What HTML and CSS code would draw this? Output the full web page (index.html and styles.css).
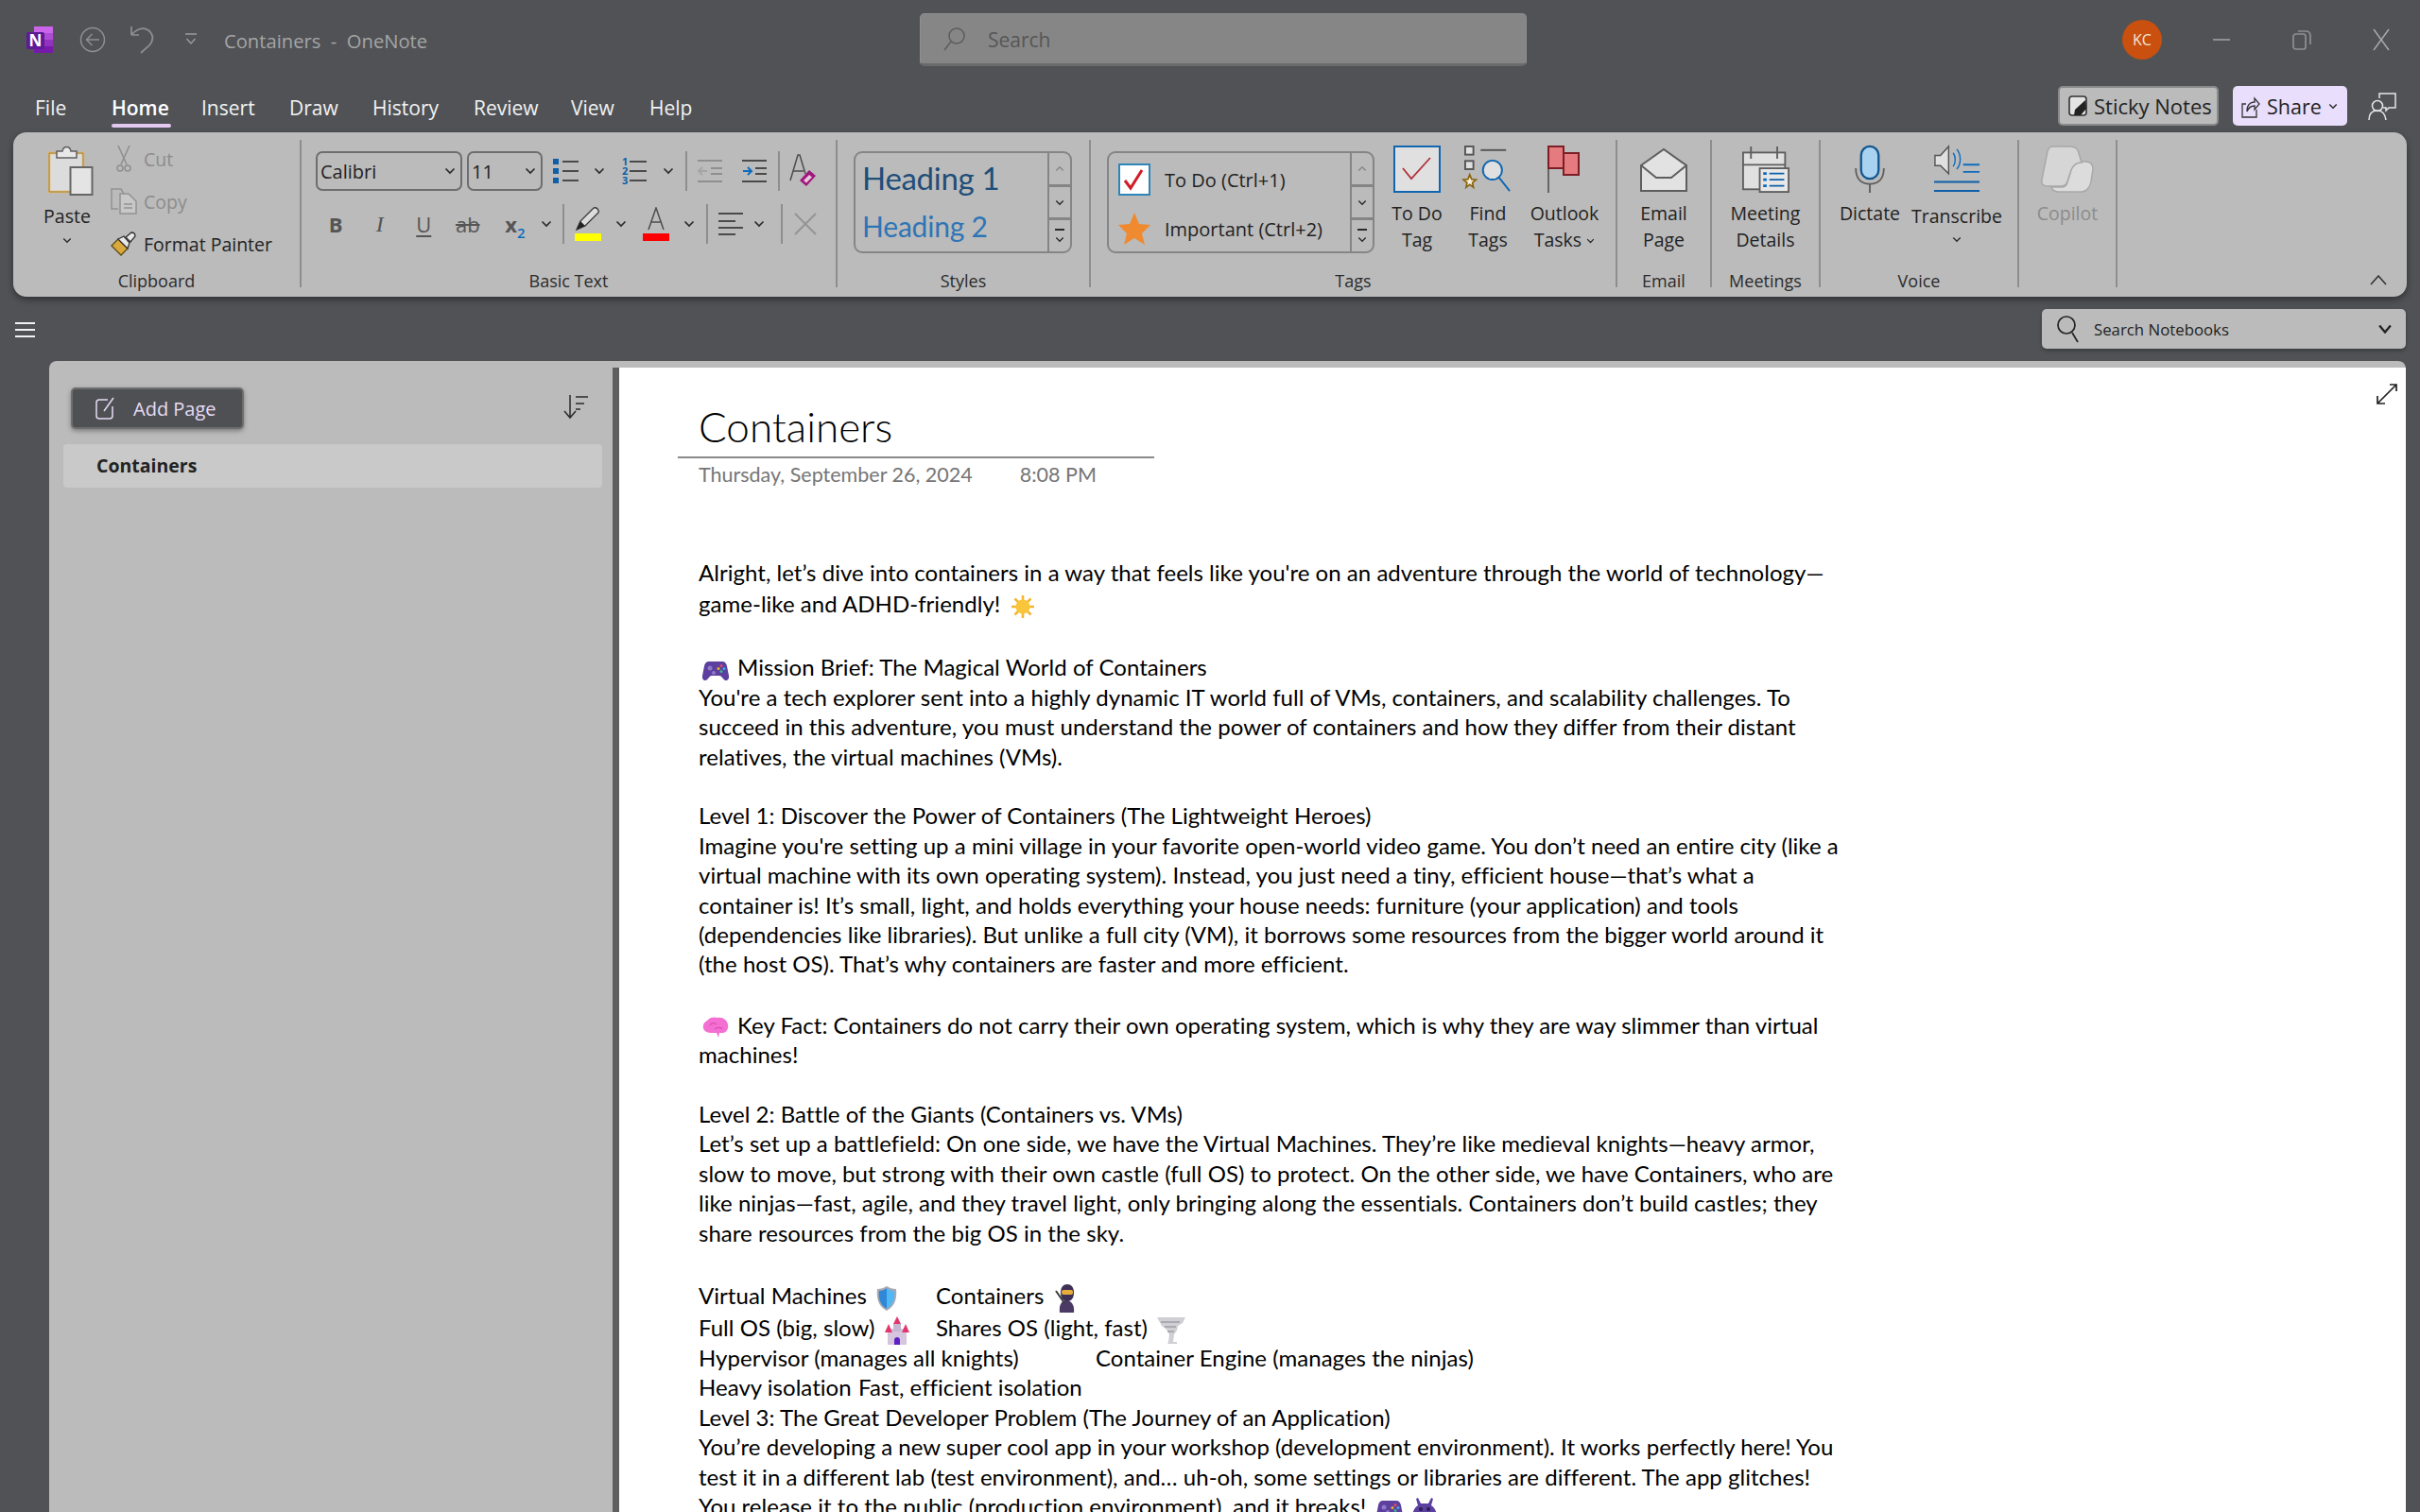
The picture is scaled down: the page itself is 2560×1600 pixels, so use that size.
FILE: index.html
```html
<!DOCTYPE html>
<html lang="en">
<head>
  <meta charset="UTF-8" />
  <title>Containers - OneNote</title>
  <link rel="stylesheet" href="styles.css">
</head>
<body>

  <!-- Shared icons -->
  <svg class="defs" width="0" height="0" aria-hidden="true">
    <symbol id="chev" viewBox="0 0 12 8"><path d="M1.5 1.5 6 6l4.500-4.500" fill="none" stroke="#2b2b2b" stroke-width="1.700"/></symbol>
    <symbol id="pad" viewBox="0 0 28 24">
      <path d="M7 3h14c3 0 4.500 2 5 5l2 10c.5 3-1 5-3 5-3 0-4-5-7-5H10c-3 0-4 5-7 5-2 0-3.500-2-3-5L2 8c.5-3 2-5 5-5z" fill="#5c3f9e"/>
      <circle cx="8" cy="10" r="2.500" fill="#8e79c9"/><circle cx="12" cy="15" r="2" fill="#8e79c9"/>
      <circle cx="20" cy="7.500" r="1.500" fill="#e04a6a"/><circle cx="23" cy="10.500" r="1.500" fill="#3fa7e0"/><circle cx="17" cy="10.500" r="1.500" fill="#e8b030"/><circle cx="20" cy="13.500" r="1.500" fill="#36b98a"/>
    </symbol>
  </svg>

  <!-- Title bar -->
  <header class="titlebar">
    <div class="title-left">
      <svg width="28" height="28" viewBox="0 0 28 28" class="app-icon">
        <rect x="8" width="20" height="7" fill="#ca64ea"/><rect x="8" y="7" width="20" height="7" fill="#ae4bd5"/><rect x="8" y="14" width="20" height="7" fill="#9332bf"/><rect x="8" y="21" width="20" height="7" fill="#7719aa"/>
        <rect y="6" width="19" height="18" rx="2" fill="#5f1a98"/>
        <text x="9.500" y="20.500" text-anchor="middle" class="app-n">N</text>
      </svg>
      <svg width="28" height="28" viewBox="0 0 28 28" class="back-icon"><circle cx="14" cy="14" r="12.500" fill="none" stroke="#8f8f8f" stroke-width="1.500"/><path d="M21 14H8m5.500-6L7.500 14l6 6" fill="none" stroke="#8f8f8f" stroke-width="1.500"/></svg>
      <svg width="26" height="30" viewBox="0 0 26 30" class="undo-icon"><path d="M1 10h8m-8 0V1m0 9c5-6 12-9 18-5 6 5 5 11 1 16L11 29" fill="none" stroke="#8f8f8f" stroke-width="1.700"/></svg>
      <svg width="12" height="14" viewBox="0 0 12 14" class="qat-icon"><path d="M0 1h12M1.500 6 6 11l4.500-5" fill="none" stroke="#9a9a9a" stroke-width="1.500"/></svg>
      <span class="doc-title">Containers&nbsp; -&nbsp; OneNote</span>
    </div>
    <div class="top-search">
      <svg width="24" height="26" viewBox="0 0 24 26"><circle cx="14" cy="10" r="8" fill="none" stroke="#5c5c5c" stroke-width="1.500"/><path d="M8 16 1 25" stroke="#5c5c5c" stroke-width="1.500"/></svg>
      <span>Search</span>
    </div>
    <div class="title-right">
      <div class="avatar">KC</div>
      <svg width="18" height="4" viewBox="0 0 18 4" class="win-min"><path d="M0 2h18" stroke="#8f8f8f" stroke-width="2"/></svg>
      <svg width="20" height="22" viewBox="0 0 20 22" class="win-max"><rect x="1" y="5" width="13" height="16" rx="2.500" fill="none" stroke="#8f8f8f" stroke-width="1.700"/><path d="M6 2h8c3 0 5 2 5 5v9" fill="none" stroke="#8f8f8f" stroke-width="1.700"/></svg>
      <svg width="18" height="24" viewBox="0 0 18 24" class="win-close"><path d="M1 1l16 22M17 1 1 23" stroke="#a8a8a8" stroke-width="1.500"/></svg>
    </div>
  </header>

  <!-- Tabs -->
  <nav class="tabs">
    <span class="tab">File</span>
    <span class="tab active"><b>Home</b></span>
    <span class="tab">Insert</span>
    <span class="tab">Draw</span>
    <span class="tab">History</span>
    <span class="tab">Review</span>
    <span class="tab">View</span>
    <span class="tab">Help</span>
    <div class="tab-actions">
      <button class="sticky-btn">
        <svg width="20" height="22" viewBox="0 0 20 22"><rect x="1" y="1" width="18" height="20" rx="3" fill="#e4e4e4" stroke="#333" stroke-width="1.600"/><path d="M18 5 7 15l-1 6h7l6-7z" fill="#222"/></svg>
        Sticky Notes
      </button>
      <button class="share-btn">
        <svg width="20" height="26" viewBox="0 0 20 26"><path d="M5 11H1v14h15v-8" fill="none" stroke="#333" stroke-width="1.300"/><path d="M6 19c0-7 3-10 8-10V5l5 6-5 6v-4c-3 0-6 1-8 6z" fill="#e8dcfb" stroke="#333" stroke-width="1.300"/></svg>
        Share
        <svg width="10" height="7" viewBox="0 0 12 8"><use href="#chev"/></svg>
      </button>
      <svg width="30" height="30" viewBox="0 0 30 30" class="feedback-icon"><path d="M12 6V1h17v15h-7l-3 3v-3h-3" fill="none" stroke="#e6e6e6" stroke-width="1.500"/><circle cx="10" cy="14" r="5.500" fill="#505256" stroke="#e6e6e6" stroke-width="1.500"/><path d="M1 29c0-7 4-10 9-10s8 3 9 10" fill="none" stroke="#e6e6e6" stroke-width="1.500"/></svg>
    </div>
  </nav>

  <!-- Ribbon -->
  <section class="ribbon">

    <div class="group g-clipboard">
      <div class="group-body">
        <div class="paste-col">
          <svg width="50" height="53" viewBox="0 0 50 53">
            <rect x="2" y="8" width="36" height="41" fill="#dcdcdc" stroke="#e9b44f" stroke-width="2.500"/>
            <path d="M2 8h36v41H2z" fill="none" stroke="#6b6b6b" stroke-width=".6"/>
            <path d="M10 6h6c1-6 8-6 9 0h6v7H10z" fill="#e8e8e8" stroke="#5f5f5f" stroke-width="1.500"/>
            <rect x="24.500" y="23" width="23" height="29" fill="#e4e4e4" stroke="#666" stroke-width="2"/>
          </svg>
          <span class="paste-label">Paste</span>
          <svg width="10" height="7" class="paste-chev"><use href="#chev"/></svg>
        </div>
        <div class="clip-col">
          <div class="clip-row off">
            <span class="clip-icon"><svg width="18" height="28" viewBox="0 0 18 28"><path d="M3 0l9 20M15 0 6 20" fill="none" stroke="#8f8f8f" stroke-width="1.500"/><circle cx="5" cy="24" r="3" fill="none" stroke="#8f8f8f" stroke-width="1.500"/><circle cx="13" cy="24" r="3" fill="none" stroke="#8f8f8f" stroke-width="1.500"/></svg></span>
            Cut
          </div>
          <div class="clip-row off">
            <span class="clip-icon"><svg width="28" height="28" viewBox="0 0 28 28"><path d="M8 22H1V1h10l3 5" fill="none" stroke="#929292" stroke-width="1.500"/><path d="M10 6h9l8 8v13H10z" fill="#c8c8c8" stroke="#929292" stroke-width="1.500"/><path d="M14 17h9M14 21h9" stroke="#929292" stroke-width="1.500"/></svg></span>
            Copy
          </div>
          <div class="clip-row">
            <span class="clip-icon"><svg width="28" height="26" viewBox="0 0 28 26"><path d="M1 15l7-7 10 10-7 7z" fill="#d9a93c" stroke="#5c4a15" stroke-width="1.300"/><path d="M8 8l6-3 6 7-2 6z" fill="#e8e8e8" stroke="#333" stroke-width="1.300"/><path d="M16 6l6-5c3 0 4 2 4 4l-5 6z" fill="#e8e8e8" stroke="#333" stroke-width="1.300"/></svg></span>
            Format Painter
          </div>
        </div>
      </div>
      <div class="group-label">Clipboard</div>
    </div>

    <div class="group g-basic">
      <div class="basic-rows">
        <div class="basic-row">
          <div class="combo combo-font">Calibri<svg width="12" height="8"><use href="#chev"/></svg></div>
          <div class="combo combo-size">11<svg width="12" height="8"><use href="#chev"/></svg></div>
          <svg width="27" height="28" viewBox="0 0 27 28" class="m11"><path d="M0 1h6v6H0zM0 11h6v6H0zM0 21h6v6H0z" fill="#0f5fa8"/><path d="M10 4h17M10 14h17M10 24h17" stroke="#4a4a4a" stroke-width="2"/></svg>
          <svg width="12" height="8" class="m16"><use href="#chev"/></svg>
          <svg width="27" height="32" viewBox="0 0 27 32" class="m17 num-list"><text x="1" y="10" class="num">1</text><text x="1" y="20" class="num">2</text><text x="1" y="30" class="num">3</text><path d="M9 6h18M9 16h18M9 26h18" stroke="#4a4a4a" stroke-width="2"/></svg>
          <svg width="12" height="8" class="m17"><use href="#chev"/></svg>
          <i class="vsep m12"></i>
          <svg width="26" height="26" viewBox="0 0 26 26" class="m11"><path d="M0 2h26M14 10h12M14 16h12M0 24h26" stroke="#8f8f8f" stroke-width="2"/><path d="M10 13H1m4-4-4 4 4 4" fill="none" stroke="#a5a5a5" stroke-width="2"/></svg>
          <svg width="26" height="26" viewBox="0 0 26 26" class="m21"><path d="M0 2h26M14 10h12M14 16h12M0 24h26" stroke="#4a4a4a" stroke-width="2"/><path d="M1 13h9m-4-4 4 4-4 4" fill="none" stroke="#0f6cbd" stroke-width="2"/></svg>
          <i class="vsep m12"></i>
          <svg width="28" height="36" viewBox="0 0 28 36" class="m10"><path d="M1 28 9 1h2l6 20M4 18h11" fill="none" stroke="#4d4d4d" stroke-width="1.500"/><path d="M11 28 21 17l7 6-10 11z" fill="#a0177e"/><path d="M15 28l6-6 3 2.500-6 6z" fill="#e8c8dc"/></svg>
        </div>
        <div class="basic-row row-two">
          <span class="fmt fmt-b">B</span>
          <span class="fmt fmt-i">I</span>
          <span class="fmt fmt-u">U</span>
          <span class="fmt fmt-s">ab</span>
          <span class="fmt fmt-x">x<sub>2</sub></span>
          <svg width="12" height="8"><use href="#chev"/></svg>
          <i class="vsep m11"></i>
          <svg width="28" height="36" viewBox="0 0 28 36" class="m11"><path d="M2 24l4-9L20 1c3-1 6 2 5 5L11 20z" fill="#dcdcdc" stroke="#333" stroke-width="1.300"/><path d="M2 24l4-9 5 5z" fill="#222"/><rect y="28" width="28" height="8" fill="#ffff00"/></svg>
          <svg width="12" height="8" class="m15"><use href="#chev"/></svg>
          <svg width="28" height="36" viewBox="0 0 28 36" class="m17"><path d="M6 24 14 1l8 23M9 16h10" fill="none" stroke="#4d4d4d" stroke-width="1.500"/><rect y="28" width="28" height="8" fill="#ff0000"/></svg>
          <svg width="12" height="8" class="m15"><use href="#chev"/></svg>
          <i class="vsep m12"></i>
          <svg width="26" height="26" viewBox="0 0 26 26" class="m11"><path d="M0 2h26M0 10h18M0 17h26M0 24h18" stroke="#4a4a4a" stroke-width="2"/></svg>
          <svg width="12" height="8" class="m11"><use href="#chev"/></svg>
          <i class="vsep m17"></i>
          <svg width="24" height="24" viewBox="0 0 24 24" class="m12"><path d="M1 1l22 22M23 1 1 23" stroke="#939393" stroke-width="1.800"/></svg>
        </div>
      </div>
      <div class="group-label">Basic Text</div>
    </div>

    <div class="group g-styles">
      <div class="gallery styles-gallery">
        <div class="gallery-items">
          <div class="style-h1">Heading 1</div>
          <div class="style-h2">Heading 2</div>
        </div>
        <div class="scroll-col">
          <span class="off-chev"><svg width="10" height="7"><use href="#chev"/></svg></span>
          <span><svg width="10" height="7"><use href="#chev"/></svg></span>
          <span class="more"><svg width="10" height="7"><use href="#chev"/></svg></span>
        </div>
      </div>
      <div class="group-label">Styles</div>
    </div>

    <div class="group g-tags">
      <div class="group-body">
        <div class="gallery tags-gallery">
          <div class="gallery-items">
            <div class="tag-row">
              <svg width="34" height="34" viewBox="0 0 34 34"><rect x="1" y="1" width="32" height="32" fill="#fff" stroke="#2e86b8" stroke-width="2"/><path d="M7 18l6 8L25 7" fill="none" stroke="#d01c24" stroke-width="3"/></svg>
              To Do (Ctrl+1)
            </div>
            <div class="tag-row">
              <svg width="34" height="34" viewBox="0 0 34 34"><path d="M17 0l5 12 12 1-9 9 3 12-11-7-11 7 3-12-9-9 12-1z" fill="#f08a30"/></svg>
              Important (Ctrl+2)
            </div>
          </div>
          <div class="scroll-col">
            <span class="off-chev"><svg width="10" height="7"><use href="#chev"/></svg></span>
            <span><svg width="10" height="7"><use href="#chev"/></svg></span>
            <span class="more"><svg width="10" height="7"><use href="#chev"/></svg></span>
          </div>
        </div>
        <div class="tool w82">
          <svg width="50" height="50" viewBox="0 0 50 50"><rect x="1" y="1" width="48" height="48" fill="#e0e0e0" stroke="#1067b0" stroke-width="2"/><path d="M10 24l9 11L39 13" fill="none" stroke="#b0313a" stroke-width="1.800"/></svg>
          <span>To Do<br>Tag</span>
        </div>
        <div class="tool w68">
          <svg width="52" height="52" viewBox="0 0 52 52"><rect x="1" y="1" width="9" height="9" fill="#e0e0e0" stroke="#555" stroke-width="2"/><path d="M18 5h28" stroke="#555" stroke-width="2"/><rect x="1" y="17" width="9" height="9" fill="#e0e0e0" stroke="#555" stroke-width="2"/><path d="M6 32l2 5 5 .5-4 3.500 1 5-4-3-4 3 1-5-4-3.500 5-.5z" fill="#f5f0dc" stroke="#8a6510" stroke-width="1.800"/><circle cx="31" cy="27" r="10.500" fill="#e0e0e0" stroke="#1067b0" stroke-width="2"/><path d="M38 35l12 15" stroke="#1067b0" stroke-width="2"/></svg>
          <span>Find<br>Tags</span>
        </div>
        <div class="tool w94">
          <svg width="36" height="50" viewBox="0 0 36 50"><path d="M1 0v50" stroke="#666" stroke-width="2"/><rect x="1" y="1" width="16" height="23" fill="#e57b7f" stroke="#7d1e26" stroke-width="2"/><rect x="17" y="8" width="16" height="23" fill="#e57b7f" stroke="#7d1e26" stroke-width="2"/></svg>
          <span>Outlook<br>Tasks <svg width="9" height="6"><use href="#chev"/></svg></span>
        </div>
      </div>
      <div class="group-label">Tags</div>
    </div>

    <div class="group g-email">
      <div class="group-body">
        <div class="tool tool-fill">
          <svg class="pad3" width="50" height="46" viewBox="0 0 50 46"><path d="M1 18 25 1l24 17v27H1z" fill="#e2e2e2" stroke="#5e5e5e" stroke-width="2"/><path d="M1 18l16 13h16l16-13" fill="none" stroke="#5e5e5e" stroke-width="2"/></svg>
          <span>Email<br>Page</span>
        </div>
      </div>
      <div class="group-label">Email</div>
    </div>

    <div class="group g-meetings">
      <div class="group-body">
        <div class="tool tool-fill">
          <svg width="54" height="54" viewBox="0 0 54 54"><rect x="1" y="8" width="48" height="42" fill="#e0e0e0" stroke="#5e5e5e" stroke-width="2"/><path d="M1 22h48M10 1v14M40 1v14" stroke="#5e5e5e" stroke-width="2"/><rect x="20" y="26" width="33" height="27" fill="#e8e8e8" stroke="#5e5e5e" stroke-width="2"/><path d="M24 32h4M24 39h4M24 46h4" stroke="#0f6cbd" stroke-width="3"/><path d="M31 32h17M31 39h17M31 46h17" stroke="#0f5fa8" stroke-width="2"/></svg>
          <span>Meeting<br>Details</span>
        </div>
      </div>
      <div class="group-label">Meetings</div>
    </div>

    <div class="group g-voice">
      <div class="group-body">
        <div class="tool w102 dictate">
          <svg width="34" height="54" viewBox="0 0 34 54"><rect x="7" y="1" width="20" height="37" rx="10" fill="#a9d2f0" stroke="#12568f" stroke-width="2.500"/><path d="M1 26c0 13 7 18 16 18s16-5 16-18M17 44v10" fill="none" stroke="#5e5e5e" stroke-width="2"/></svg>
          <span>Dictate</span>
        </div>
        <div class="tool w82 transcribe">
          <svg width="50" height="52" viewBox="0 0 50 52"><path d="M1 11h6l9-10v30l-9-9H1z" fill="#e0e0e0" stroke="#555" stroke-width="1.500"/><path d="M21 8c3 4 3 11 0 15M25 4c5 6 5 16 0 22" fill="none" stroke="#0f6cbd" stroke-width="1.500"/><path d="M32 21h18M32 29h18" stroke="#0f6cbd" stroke-width="2"/><path d="M0 40h50M0 50h50" stroke="#0f5fa8" stroke-width="2"/></svg>
          <span>Transcribe</span>
          <svg class="tool-chev" width="10" height="7"><use href="#chev"/></svg>
        </div>
      </div>
      <div class="group-label">Voice</div>
    </div>

    <div class="group g-copilot">
      <div class="group-body">
        <div class="tool tool-fill off">
          <svg width="56" height="50" viewBox="0 0 56 50"><path d="M33 17h14c5 0 8 3 8 8l-2 13c-1 6-5 11-10 11H19c-4 0-7-2-8-5h11c3 0 5-2 6-5l4-14z" fill="#dcdcdc" stroke="#a8a8a8" stroke-width="1.500"/><path d="M12 1h19c5 0 8 2 9 7l3 10c-6 0-9 3-11 8l-4 12c-1 4-3 5-7 5H6c-4 0-6-3-5-7L7 6c1-3 3-5 5-5z" fill="#d6d6d6" stroke="#a8a8a8" stroke-width="1.500"/></svg>
          <span>Copilot</span>
        </div>
      </div>
      <div class="group-label">&nbsp;</div>
    </div>

    <div class="collapse"><svg width="18" height="11" viewBox="0 0 18 11"><path d="M1 10 9 1l8 9" fill="none" stroke="#333" stroke-width="1.600"/></svg></div>
  </section>

  <!-- Notebook bar -->
  <div class="subbar">
    <div class="hamburger"><i></i><i></i><i></i></div>
    <div class="notebook-search">
      <svg width="24" height="32" viewBox="0 0 24 32"><circle cx="10" cy="12" r="9" fill="none" stroke="#222" stroke-width="1.700"/><path d="M16 20l6 10" stroke="#222" stroke-width="1.700"/></svg>
      <span>Search Notebooks</span>
      <svg width="14" height="10" class="search-chev" viewBox="0 0 12 8"><path d="M1 1l5 6 5-6" fill="none" stroke="#222" stroke-width="2"/></svg>
    </div>
  </div>

  <!-- Page list and page -->
  <main class="workspace">
    <aside class="sidebar">
      <div class="sidebar-head">
        <button class="add-page">
          <svg width="22" height="24" viewBox="0 0 22 24"><path d="M13 3H4C2 3 1 4 1 6v14c0 2 1 3 3 3h11c2 0 3-1 3-3V10" fill="none" stroke="#e6dcf5" stroke-width="1.500"/><path d="M9 15 19 1" stroke="#e6dcf5" stroke-width="1.500"/></svg>
          Add Page
        </button>
        <svg width="26" height="26" viewBox="0 0 26 26"><path d="M7 0v24m-6-7 6 7 6-7" fill="none" stroke="#2b2b2b" stroke-width="1.500"/><path d="M13 2h13M13 9h9M13 15h5" stroke="#2b2b2b" stroke-width="1.500"/></svg>
      </div>
      <div class="page-item">Containers</div>
    </aside>

    <article class="page">
      <svg class="expand" width="22" height="22" viewBox="0 0 22 22"><path d="M14 1h7v7M21 1 1 21M1 13v8h8" fill="none" stroke="#222" stroke-width="1.700"/></svg>
      <div class="page-title-box">
        <h1>Containers</h1>
      </div>
      <div class="page-date"><span>Thursday, September 26, 2024</span><span>8:08 PM</span></div>

      <div class="page-text">
        <p class="first">
          <span class="line">Alright, let’s dive into containers in a way that feels like you're on an adventure through the world of technology—</span>
          <span class="line tall">game-like and ADHD-friendly! <svg class="emoji" width="26" height="26" viewBox="0 0 26 26"><g stroke="#f5b52e" stroke-width="2.500"><path d="M13 1v24M1 13h24M4.500 4.500l17 17M21.500 4.500l-17 17"/></g><circle cx="13" cy="13" r="7.500" fill="#f9c53a"/></svg></span>
        </p>
        <p class="tight">
          <span class="line"><svg class="emoji lead" width="28" height="24"><use href="#pad"/></svg>Mission Brief: The Magical World of Containers</span>
          <span class="line">You're a tech explorer sent into a highly dynamic IT world full of VMs, containers, and scalability challenges. To</span>
          <span class="line">succeed in this adventure, you must understand the power of containers and how they differ from their distant</span>
          <span class="line">relatives, the virtual machines (VMs).</span>
        </p>
        <p>
          <span class="line">Level 1: Discover the Power of Containers (The Lightweight Heroes)</span>
          <span class="line">Imagine you're setting up a mini village in your favorite open-world video game. You don’t need an entire city (like a</span>
          <span class="line">virtual machine with its own operating system). Instead, you just need a tiny, efficient house—that’s what a</span>
          <span class="line">container is! It’s small, light, and holds everything your house needs: furniture (your application) and tools</span>
          <span class="line">(dependencies like libraries). But unlike a full city (VM), it borrows some resources from the bigger world around it</span>
          <span class="line">(the host OS). That’s why containers are faster and more efficient.</span>
        </p>
        <p class="tight">
          <span class="line"><svg class="emoji lead" width="28" height="24" viewBox="0 0 28 24"><path d="M5 4c3-4 8-4 11-3 5-1 10 2 11 7 1 5-2 9-6 9h-3l-1 5-2-5H9C3 17 0 13 1 9c0-2 2-4 4-5z" fill="#f46fd2"/><path d="M8 9c2-3 5-3 7-1M13 13c3-2 6-2 8 0" fill="none" stroke="#d94cb2" stroke-width="1.200"/></svg>Key Fact: Containers do not carry their own operating system, which is why they are way slimmer than virtual</span>
          <span class="line">machines!</span>
        </p>
        <p>
          <span class="line">Level 2: Battle of the Giants (Containers vs. VMs)</span>
          <span class="line">Let’s set up a battlefield: On one side, we have the Virtual Machines. They’re like medieval knights—heavy armor,</span>
          <span class="line">slow to move, but strong with their own castle (full OS) to protect. On the other side, we have Containers, who are</span>
          <span class="line">like ninjas—fast, agile, and they travel light, only bringing along the essentials. Containers don’t build castles; they</span>
          <span class="line">share resources from the big OS in the sky.</span>
        </p>
        <p class="last">
          <span class="line tall"><span class="tab-a">Virtual Machines <svg class="emoji" width="22" height="26" viewBox="0 0 22 26"><path d="M11 0c3 2 6 3 10 3 1 10-1 18-10 23C2 21 0 13 1 3c4 0 7-1 10-3z" fill="#a7a9b3"/><path d="M11 2v22C4 20 2 13 3 5c3 0 6-1 8-3z" fill="#2f87d6"/><path d="M11 2c2 2 5 3 8 3 1 8-1 15-8 19z" fill="#52b7f5"/></svg></span>Containers <svg class="emoji" width="26" height="32" viewBox="0 0 26 32"><path d="M6 31c-1-8 2-13 7-13s9 5 8 13z" fill="#4b3a63"/><path d="M7 10c0-6 3-9 7-9s7 3 7 9-3 9-7 9-7-3-7-9z" fill="#3f3155"/><rect x="8" y="7" width="12" height="5" rx="2" fill="#e8ad3c"/><path d="M2 8l9 13" stroke="#3b3b3b" stroke-width="2"/></svg></span>
          <span class="line tall2"><span class="tab-a">Full OS (big, slow) <svg class="emoji" width="26" height="30" viewBox="0 0 26 30"><path d="M3 13h20v17H3z" fill="#d5c6de"/><path d="M9 8h8v8H9z" fill="#c7b6d3"/><path d="M13 0l4 8H9z" fill="#e2376d"/><path d="M4 8l4 9H0zM22 8l4 9h-8z" fill="#e2376d"/><path d="M10 30v-5c0-4 6-4 6 0v5z" fill="#5e1fc7"/></svg></span>Shares OS (light, fast) <svg class="emoji" width="30" height="30" viewBox="0 0 30 30"><path d="M0 1h30l-3 6-5 3-1 5-3 4-1 8h4v2H11l1-2 1-8-3-5-5-4z" fill="#cfcfd4"/><path d="M4 6h20M8 11h12M11 16h7" stroke="#9e9ea6" stroke-width="1.500"/></svg></span>
          <span class="line"><span class="tab-b">Hypervisor (manages all knights)</span>Container Engine (manages the ninjas)</span>
          <span class="line"><span class="tab-c">Heavy isolation</span>Fast, efficient isolation</span>
          <span class="line">Level 3: The Great Developer Problem (The Journey of an Application)</span>
          <span class="line">You’re developing a new super cool app in your workshop (development environment). It works perfectly here! You</span>
          <span class="line">test it in a different lab (test environment), and… uh-oh, some settings or libraries are different. The app glitches!</span>
          <span class="line">You release it to the public (production environment), and it breaks! <svg class="emoji" width="28" height="24"><use href="#pad"/></svg> <svg class="emoji" width="26" height="24" viewBox="0 0 26 24"><path d="M6 0l3 6h8l3-6 2 1-2 7c3 2 5 5 6 10h-4l-2-3-1 5h-4v-3h-4v3H7l-1-5-2 3H0c1-5 3-8 6-10L4 1z" fill="#5c3f9e"/><circle cx="9" cy="12" r="2" fill="#2b1d52"/><circle cx="17" cy="12" r="2" fill="#2b1d52"/></svg></span>
        </p>
      </div>
    </article>
  </main>

</body>
</html>
```

FILE: styles.css
```css
* {
  box-sizing: border-box;
}
html, body {
  height: 1600px;
  overflow: hidden;
}
body {
  margin: 0;
  background: #505256;
  font-family: "Open Sans", "Noto Sans", sans-serif;
  font-size: 18px;
  color: #222;
}
.defs {
  position: absolute;
}
button {
  font-family: inherit;
  cursor: pointer;
}
svg {
  flex: none;
  display: block;
}

/* Title bar */
.titlebar {
  height: 84px;
  display: flex;
  align-items: center;
}
.title-left {
  width: 973px;
  display: flex;
  align-items: center;
}
.app-icon {
  margin-left: 28px;
}
.app-n {
  font-family: "Open Sans", sans-serif;
  font-weight: 700;
  font-size: 17px;
  fill: #fff;
}
.back-icon {
  margin-left: 28px;
}
.undo-icon {
  margin-left: 26px;
}
.qat-icon {
  margin-left: 32px;
}
.doc-title {
  margin: 2px 0 0 29px;
  color: #a5a5a5;
  font-size: 20.200px;
}
.top-search {
  width: 642px;
  height: 56px;
  margin-top: 0;
  display: flex;
  align-items: center;
  padding-left: 24px;
  gap: 23px;
  background: #868686;
  border: 1px solid #8f8f8f;
  border-bottom: 3px solid #6a6a6a;
  border-radius: 5px;
  color: #565656;
  font-size: 21px;
}
.top-search span {
  margin-top: 2px;
}
.title-right {
  flex: 1;
  display: flex;
  align-items: center;
  padding-left: 630px;
}
.avatar {
  width: 42px;
  height: 42px;
  border-radius: 50%;
  background: #c9500f;
  color: #f3e6dc;
  font-size: 16px;
  display: flex;
  align-items: center;
  justify-content: center;
  flex: none;
}
.win-min {
  margin-left: 54px;
}
.win-max {
  margin-left: 66px;
}
.win-close {
  margin-left: 65px;
}

/* Tabs */
.tabs {
  height: 56px;
  display: grid;
  grid-template-columns: 81px 95px 93px 88px 107px 103px 83px 60px 1fr;
  padding: 0 25px 0 37px;
  align-items: start;
}
.tab {
  color: #f2f2f2;
  font-size: 21px;
  line-height: 28px;
  padding-top: 16px;
}
.tab.active {
  position: relative;
  color: #fff;
}
.tab.active b {
  font-weight: 600;
}
.tab.active::after {
  content: "";
  position: absolute;
  left: 0;
  top: 47px;
  width: 63px;
  height: 4px;
  border-radius: 2px;
  background: #e3c8f0;
}
.tab-actions {
  display: flex;
  justify-content: flex-end;
  align-items: flex-start;
  padding-top: 7px;
}
.sticky-btn, .share-btn {
  height: 42px;
  display: flex;
  align-items: center;
  border-radius: 5px;
  color: #222;
  padding: 0;
}
.sticky-btn {
  width: 170px;
  gap: 7px;
  padding-left: 9px;
  background: #bbb;
  border: 2px solid #8a8a8a;
  font-size: 22px;
}
.share-btn {
  width: 121px;
  margin-left: 15px;
  gap: 7px;
  padding-left: 9px;
  background: #e9defb;
  border: none;
  font-size: 21.500px;
}
.feedback-icon {
  margin: 7px 0 0 22px;
}

/* Ribbon */
.ribbon {
  position: relative;
  height: 174px;
  margin: 0 14px;
  padding-top: 8px;
  display: flex;
  align-items: flex-start;
  background: #bbb;
  border-radius: 14px;
  box-shadow: 0 3px 7px rgba(0, 0, 0, 0.4);
}
.group {
  height: 156px;
  flex: none;
  display: flex;
  flex-direction: column;
  border-right: 2px solid #8e8e8e;
}
.group-body {
  flex: 1;
  display: flex;
  align-items: flex-start;
}
.group-label {
  height: 20px;
  line-height: 20px;
  margin-top: auto;
  margin-bottom: -3px;
  text-align: center;
  font-size: 18px;
  color: #2b2b2b;
}
.g-clipboard { width: 305px; }
.g-basic { width: 567px; }
.g-styles { width: 268px; }
.g-tags { width: 557px; }
.g-email { width: 100px; }
.g-meetings { width: 115px; }
.g-voice { width: 210px; }
.g-copilot { width: 104px; }

.off {
  color: #8c8c8c;
}

/* Clipboard */
.paste-col {
  width: 76px;
  margin: 6px 0 0 19px;
  display: flex;
  flex-direction: column;
  align-items: center;
}
.paste-col svg:first-child {
  margin-left: 8px;
}
.paste-label {
  margin-top: 10px;
  line-height: 24px;
  font-size: 19.500px;
}
.paste-chev {
  margin-top: 10px;
}
.clip-col {
  margin: 5px 0 0 7px;
  display: flex;
  flex-direction: column;
  gap: 15px;
}
.clip-row {
  height: 30px;
  display: flex;
  align-items: center;
  font-size: 19.500px;
}
.clip-icon {
  width: 29px;
  margin-right: 7px;
  display: flex;
  justify-content: center;
}

/* Basic text */
.basic-rows {
  flex: 1;
  padding: 12px 0 0 15px;
}
.basic-row {
  height: 42px;
  display: flex;
  align-items: center;
}
.row-two {
  margin: 14px 0 0 -2px;
}
.combo {
  height: 42px;
  display: flex;
  align-items: center;
  justify-content: space-between;
  padding: 0 5px 0 3px;
  border: 2px solid #6e6e6e;
  border-radius: 7px;
  font-size: 20px;
}
.combo-font {
  width: 155px;
}
.combo-size {
  width: 80px;
  margin-left: 5px;
}
.vsep {
  display: block;
  width: 2px;
  height: 42px;
  background: #8e8e8e;
  flex: none;
}
.m10 { margin-left: 10px; }
.m11 { margin-left: 11px; }
.m12 { margin-left: 12px; }
.m15 { margin-left: 15px; }
.m16 { margin-left: 16px; }
.m17 { margin-left: 17px; }
.m21 { margin-left: 21px; }
.num-list {
  overflow: visible;
}
.num {
  font-size: 11px;
  font-weight: 700;
  fill: #0f5fa8;
  font-family: "Open Sans", sans-serif;
}
.fmt {
  width: 46.500px;
  text-align: center;
  font-size: 22px;
  color: #555;
  flex: none;
}
.fmt-b {
  font-weight: 700;
}
.fmt-i {
  font-family: "Liberation Serif", serif;
  font-style: italic;
  font-size: 24px;
}
.fmt-u {
  text-decoration: underline;
  text-underline-offset: 3px;
}
.fmt-s {
  text-decoration: line-through;
}
.fmt-x {
  width: 54px;
  font-weight: 700;
}
.fmt-x sub {
  font-size: 15px;
  font-weight: 600;
  color: #0f6cbd;
  vertical-align: -6px;
  line-height: 0;
}

/* Galleries */
.gallery {
  height: 108px;
  display: flex;
  border: 2px solid #858585;
  border-radius: 9px;
  flex: none;
  overflow: hidden;
}
.styles-gallery {
  width: 231px;
  margin: 12px 0 0 17px;
}
.tags-gallery {
  width: 283px;
  margin: 12px 4px 0 17px;
}
.gallery-items {
  flex: 1;
  padding-left: 7px;
}
.style-h1, .style-h2 {
  font-family: Lato, sans-serif;
  line-height: 50px;
  white-space: nowrap;
}
.style-h1 {
  font-size: 33px;
  letter-spacing: -0.3px;
  color: #1f4e79;
  margin-top: 1px;
}
.style-h2 {
  font-size: 30px;
  letter-spacing: -0.2px;
  color: #2e75b6;
  margin-top: 1px;
}
.scroll-col {
  width: 24px;
  display: flex;
  flex-direction: column;
  border-left: 2px solid #858585;
}
.scroll-col span {
  flex: 1;
  display: flex;
  align-items: center;
  justify-content: center;
  border-bottom: 3px solid #858585;
}
.scroll-col span:last-child {
  border-bottom: none;
}
.off-chev svg {
  transform: rotate(180deg);
  opacity: 0.35;
}
.scroll-col .more {
  position: relative;
}
.scroll-col .more::before {
  content: "";
  position: absolute;
  top: 9px;
  left: 6px;
  width: 10px;
  height: 2px;
  background: #2b2b2b;
}
.scroll-col .more svg {
  margin-top: 8px;
}
.tag-row {
  height: 52px;
  display: flex;
  align-items: center;
  gap: 15px;
  font-size: 20px;
  white-space: nowrap;
}
.tags-gallery .gallery-items {
  padding: 2px 0 0 10px;
}

/* Large ribbon buttons */
.tool {
  padding-top: 6px;
  display: flex;
  flex-direction: column;
  align-items: center;
  text-align: center;
  font-size: 19.500px;
  line-height: 28px;
  flex: none;
}
.tool > svg:first-child {
  height: 50px;
  margin-bottom: 8px;
  overflow: visible;
}
.tool span {
  white-space: nowrap;
}
.tool span svg {
  display: inline-block;
  vertical-align: 3px;
}
.tool-fill {
  width: 100%;
}
.tool-fill.off {
  color: #8c8c8c;
}
.w68 { width: 68px; }
.w82 { width: 82px; }
.w94 { width: 94px; }
.w102 { width: 102px; }
.dictate {
  margin-left: 1px;
}
.pad3 {
  margin-top: 3px;
}
.tool > .pad3:first-child {
  height: 46px;
  margin-bottom: 9px;
}
.transcribe span {
  margin-top: 3px;
}
.tool-chev {
  margin-top: 7px;
}
.collapse {
  position: absolute;
  right: 21px;
  bottom: 12px;
}

/* Notebook bar */
.subbar {
  height: 68px;
  display: flex;
  align-items: center;
  justify-content: space-between;
  padding: 0 15px 0 16px;
}
.hamburger {
  width: 21px;
  margin-top: 2px;
}
.hamburger i {
  display: block;
  height: 2px;
  margin-bottom: 5px;
  background: #f2f2f2;
}
.hamburger i:last-child {
  margin-bottom: 0;
}
.notebook-search {
  width: 385px;
  height: 42px;
  display: flex;
  align-items: center;
  padding-left: 16px;
  gap: 15px;
  background: #bbb;
  border-radius: 5px;
  box-shadow: 0 2px 4px rgba(0, 0, 0, 0.3);
  font-size: 16.800px;
}
.search-chev {
  margin-left: auto;
  margin-right: 15px;
}

/* Workspace */
.workspace {
  height: 1218px;
  margin: 0 15px 0 52px;
  padding-top: 7px;
  display: flex;
  background: #bbb;
  border-radius: 8px 8px 0 0;
}
.sidebar {
  width: 596px;
  flex: none;
}
.sidebar-head {
  height: 81px;
  display: flex;
  justify-content: space-between;
  align-items: flex-start;
  padding: 21px 26px 0 23px;
}
.sidebar-head > svg {
  margin-top: 8px;
}
.add-page {
  width: 183px;
  height: 44px;
  display: flex;
  align-items: center;
  gap: 18px;
  padding-left: 24px;
  background: #4f5054;
  border: 2px solid #6e6e6e;
  border-radius: 5px;
  box-shadow: 0 2px 5px rgba(0, 0, 0, 0.35);
  color: #e6dcf5;
  font-size: 20px;
}
.page-item {
  width: 570px;
  height: 46px;
  margin-left: 15px;
  padding-left: 35px;
  background: #c9c9c9;
  border-radius: 4px;
  font-weight: 700;
  font-size: 19.500px;
  line-height: 46px;
}
.page {
  position: relative;
  flex: 1;
  background: #fff;
  border-left: 7px solid #5f5f5f;
  font-family: Lato, sans-serif;
  color: #000;
}
.expand {
  position: absolute;
  top: 17px;
  right: 9px;
}
.page-title-box {
  width: 504px;
  height: 96px;
  margin-left: 62px;
  padding: 34px 0 0 22px;
  border-bottom: 2px solid #8a8a8a;
}
.page-title-box h1 {
  margin: 0;
  font-weight: 300;
  font-size: 44px;
  line-height: 56px;
}
.page-date {
  margin-left: 84px;
  height: 36px;
  display: flex;
  gap: 50px;
  color: #767676;
  font-size: 21.500px;
  line-height: 34px;
}
.page-text {
  margin: 69px 0 0 84px;
  font-size: 24px;
  letter-spacing: 0.03px;
}
.page-text p {
  margin: 0 0 33px;
}
.page-text p.first {
  margin-bottom: 34px;
}
.page-text p.tight {
  margin-bottom: 31.500px;
}
.page-text p.last {
  margin: 0;
}
.line {
  display: block;
  height: 31.400px;
  line-height: 31.400px;
  white-space: nowrap;
}
.tall {
  height: 35px;
  line-height: 35px;
}
.tall2 {
  height: 33px;
  line-height: 33px;
}
.emoji {
  display: inline-block;
  vertical-align: middle;
  margin-left: 4px;
}
.lead {
  margin: 0 9px 0 4px;
}
.tab-a {
  display: inline-block;
  width: 251px;
}
.tab-b {
  display: inline-block;
  width: 420px;
}
.tab-c {
  display: inline-block;
  width: 169px;
}
```
